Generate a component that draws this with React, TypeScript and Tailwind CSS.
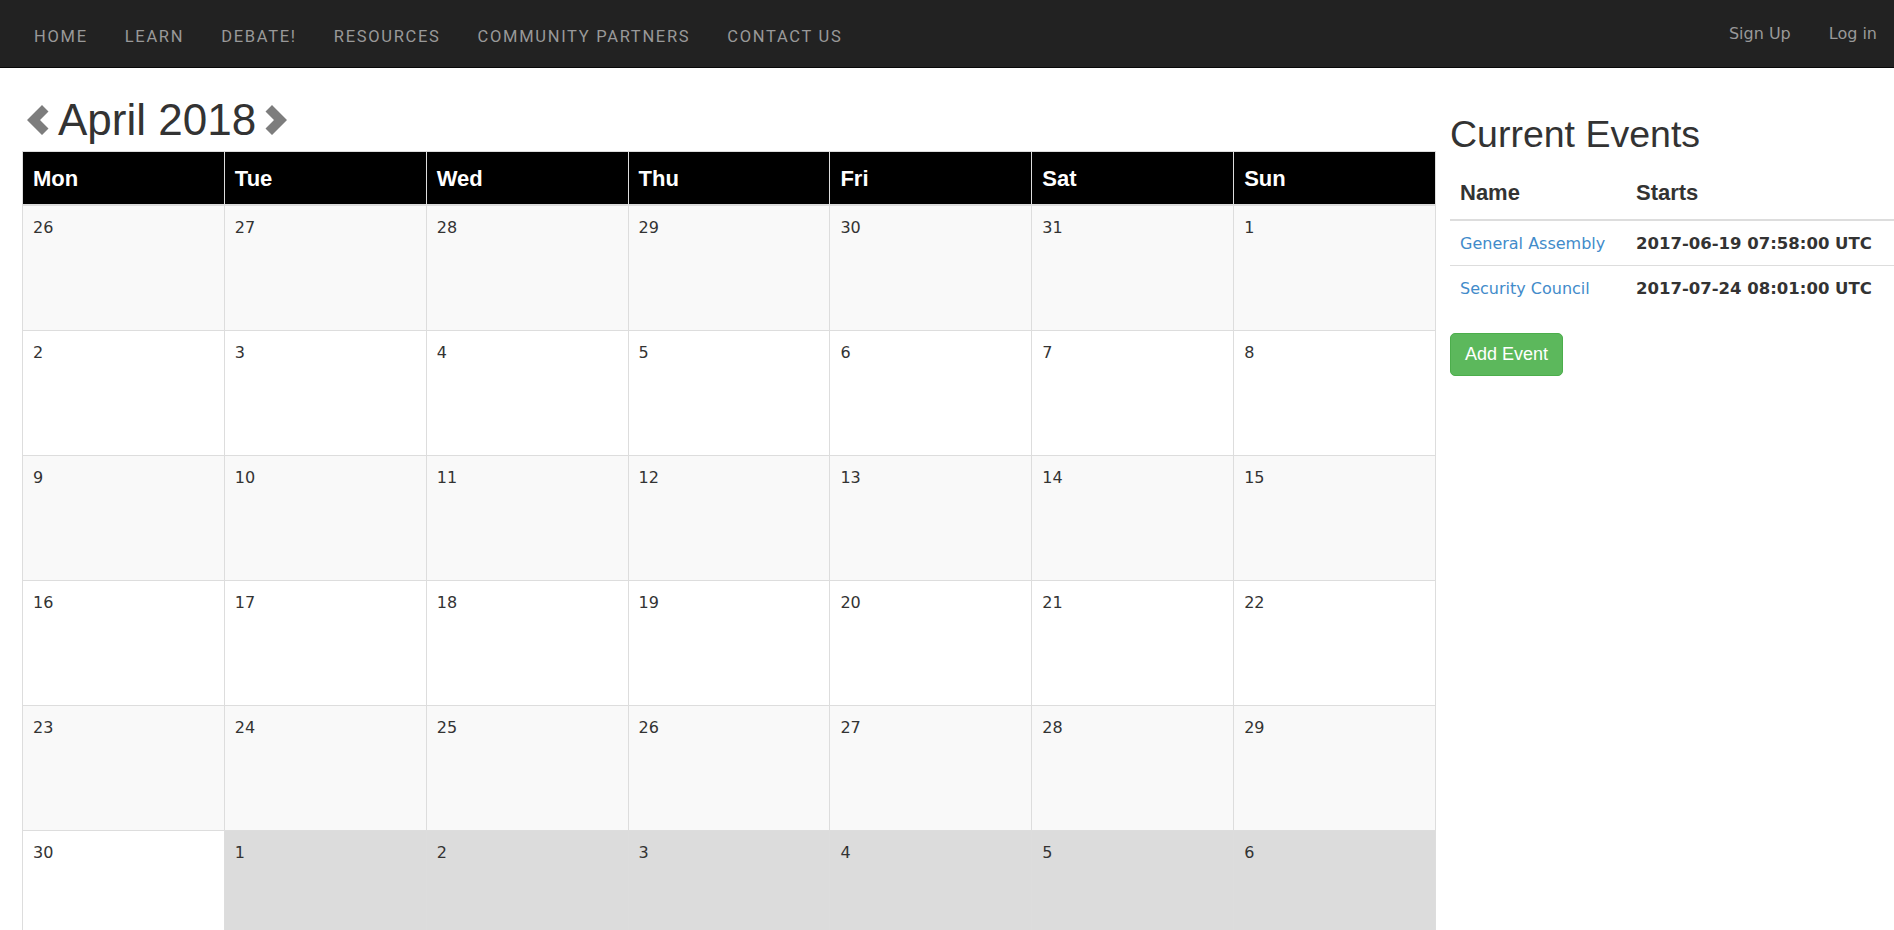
import React from "react";

const navLinks = ["Home", "Learn", "Debate!", "Resources", "Community Partners", "Contact Us"];
const days = ["Mon", "Tue", "Wed", "Thu", "Fri", "Sat", "Sun"];

// [day number, is next month]
const weeks: [number, boolean][][] = [
  [[26, false], [27, false], [28, false], [29, false], [30, false], [31, false], [1, false]],
  [[2, false], [3, false], [4, false], [5, false], [6, false], [7, false], [8, false]],
  [[9, false], [10, false], [11, false], [12, false], [13, false], [14, false], [15, false]],
  [[16, false], [17, false], [18, false], [19, false], [20, false], [21, false], [22, false]],
  [[23, false], [24, false], [25, false], [26, false], [27, false], [28, false], [29, false]],
  [[30, false], [1, true], [2, true], [3, true], [4, true], [5, true], [6, true]],
];

const events = [
  { name: "General Assembly", starts: "2017-06-19 07:58:00 UTC" },
  { name: "Security Council", starts: "2017-07-24 08:01:00 UTC" },
];

const Chevron = ({ dir }: { dir: "left" | "right" }) => (
  <svg width="22" height="30" viewBox="0 0 22 30" className="shrink-0">
    <polygon
      fill="#7d7d7d"
      points="0,15 15,0 21.5,6.5 13,15 21.5,23.5 15,30"
      transform={dir === "right" ? "matrix(-1 0 0 1 22 0)" : undefined}
    />
  </svg>
);

const App = () => {
  return (
    <div className="min-h-screen bg-white text-[#333] font-['DejaVu_Sans',Verdana,sans-serif] overflow-hidden">
      <nav className="h-[68px] bg-[#222] border-b border-[#080808] flex items-center justify-between">
        <ul className="flex items-center gap-[37px] pl-[34px] pt-[8px]">
          {navLinks.map((link) => (
            <li key={link}>
              <a href="#" className="uppercase text-[16.5px] tracking-[1.7px] text-[#999] font-['Roboto',sans-serif]">
                {link}
              </a>
            </li>
          ))}
        </ul>
        <ul className="flex items-center gap-[38px] pr-[17px]">
          <li>
            <a href="#" className="text-[16px] text-[#999]">Sign Up</a>
          </li>
          <li>
            <a href="#" className="text-[16px] text-[#999]">Log in</a>
          </li>
        </ul>
      </nav>

      <div className="flex">
        <div className="ml-[22px] w-[1414px] shrink-0">
          <div className="flex items-center mt-[28px] h-[48px] pl-[5px]">
            <Chevron dir="left" />
            <h1 className="mx-[9px] text-[44px] leading-[1.1] font-['Liberation_Sans',Arial,sans-serif]">April 2018</h1>
            <Chevron dir="right" />
          </div>

          <div className="mt-[7px] grid grid-cols-7 border-l border-[#ddd]">
            {days.map((d) => (
              <div
                key={d}
                className="h-[55px] bg-black text-white border-t border-r border-[#ddd] border-b-2 flex items-center px-[10px] text-[22px] font-bold font-['Liberation_Sans',Arial,sans-serif]"
              >
                {d}
              </div>
            ))}
            {weeks.map((week, wi) =>
              week.map(([n, next], di) => (
                <div
                  key={`${wi}-${di}`}
                  className={`h-[125px] border-r border-b border-[#ddd] px-[10px] pt-[11px] text-[16px] leading-[22.85px] ${
                    next ? "bg-[#dcdcdc]" : wi % 2 === 0 ? "bg-[#f9f9f9]" : "bg-white"
                  }`}
                >
                  {n}
                </div>
              ))
            )}
          </div>
        </div>

        <div className="ml-[14px] flex-1">
          <h2 className="mt-[46px] text-[37.5px] leading-[1.1] font-['Liberation_Sans',Arial,sans-serif]">Current Events</h2>
          <table className="mt-[17px] w-full border-collapse">
            <thead>
              <tr className="border-b-2 border-[#ddd]">
                <th className="w-[176px] text-left px-[10px] pt-[5px] pb-[11px] text-[22px] leading-[31px] font-bold font-['Liberation_Sans',Arial,sans-serif]">
                  Name
                </th>
                <th className="text-left px-[10px] pt-[5px] pb-[11px] text-[22px] leading-[31px] font-bold font-['Liberation_Sans',Arial,sans-serif]">
                  Starts
                </th>
              </tr>
            </thead>
            <tbody>
              {events.map((ev, i) => (
                <tr key={ev.name} className={i > 0 ? "border-t border-[#ddd]" : ""}>
                  <td className="px-[10px] pt-[12px] pb-[9px] leading-[22.85px] text-[16px]">
                    <a href="#" className="text-[#428bca]">{ev.name}</a>
                  </td>
                  <td className="px-[10px] pt-[12px] pb-[9px] leading-[22.85px] text-[16.5px] font-bold">{ev.starts}</td>
                </tr>
              ))}
            </tbody>
          </table>
          <button
            type="button"
            className="mt-[23px] h-[43px] px-[14px] bg-[#5cb85c] border border-[#4cae4c] rounded-[5px] text-white text-[18px] font-['Liberation_Sans',Arial,sans-serif]"
          >
            Add Event
          </button>
        </div>
      </div>
    </div>
  );
};

export default App;
